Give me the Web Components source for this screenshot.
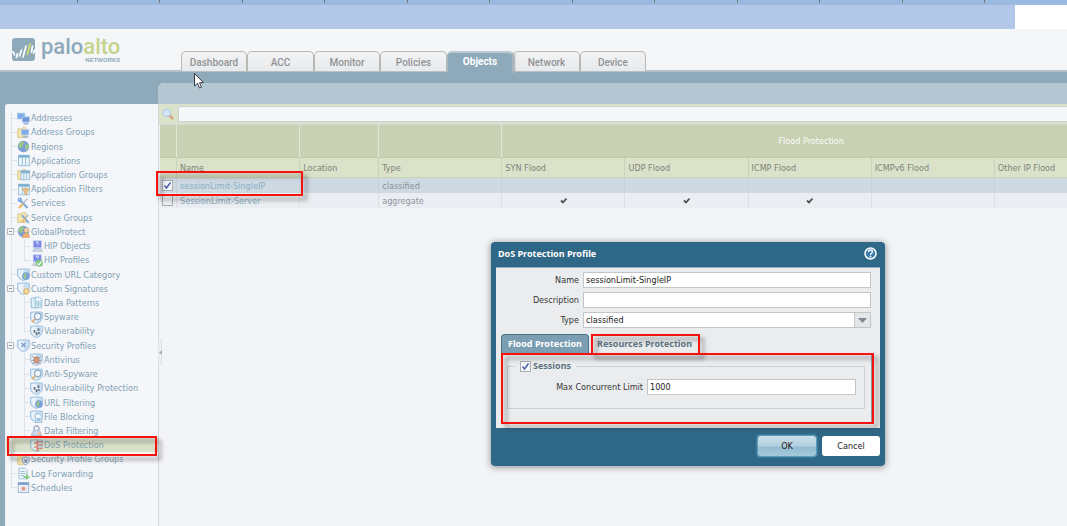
<!DOCTYPE html>
<html lang="en">
<head>
<meta charset="utf-8">
<title>DoS Protection</title>
<style>
  html, body { height: 100%; margin: 0; }
  body {
    font: 9px/14px "DejaVu Sans Condensed", "Noto Sans", sans-serif;
    background: #f3f4f6;
    overflow: hidden;
    --teal: #8da9ba;
    --link: #7fa1b4;
    --strong: bold 9px/14px "Noto Sans", sans-serif;
  }
</style>
</head>
<body>
<pan-app></pan-app>
<script>
const define = (name, html, setup) => customElements.define(name, class extends HTMLElement {
  constructor() {
    super();
    this.attachShadow({ mode: 'open' }).innerHTML = html;
  }
  connectedCallback() { if (setup) setup.call(this, this.shadowRoot); }
});

/* ---------- icons, on a 16 x 16 grid ---------- */
const P = {
  folder: '<path d="M1 3.500h5l1-1.500h4v12H1z" fill="#f6e08a" stroke="#c9a23c"/>',
  pc: '<rect x="1.500" y="1.500" width="9" height="7" fill="#3f86e0" stroke="#7aa7dc"/>',
  pcs: '<rect x=".5" y="1.500" width="9" height="7" fill="#3f86e0" stroke="#7aa7dc"/><rect x="6.500" y="6" width="9" height="6.500" fill="#2566c4" stroke="#8db4e6"/><path d="M8 14.500h6" stroke="#5479ad" stroke-width="1.500"/>',
  spc: '<rect x="5.500" y="4.500" width="9" height="6.500" fill="#3f86e0" stroke="#8db4e6"/><path d="M7 13.500h7" stroke="#5479ad" stroke-width="1.500"/>',
  globe: '<circle cx="8" cy="8" r="7" fill="#3a72c8"/><path d="M3 3.500l4-2 2 2-2 2v3L4 10 1.500 7zM10 6l4-1 .5 4-3 4-1.500-3z" fill="#68b04c"/>',
  smallGlobe: '<circle cx="11" cy="10" r="4.700" fill="#3a72c8"/><path d="M8 8l3-2 1.500 2-2 2 1 3-2 .5-1.500-3z" fill="#62ad49"/>',
  table: '<rect x="2" y="1.500" width="13" height="13" fill="#eaf5fc" stroke="#4d93bd"/><path d="M2 3h13" stroke="#3a87b7" stroke-width="3"/><path d="M6.500 3v11M10.500 3v11" stroke="#5fa2ca" stroke-width="1.200"/>',
  stable: '<rect x="5" y="3.500" width="10.500" height="11" fill="#eaf5fc" stroke="#4d93bd"/><path d="M5 5h10.500" stroke="#3a87b7" stroke-width="3"/><path d="M8.500 5v9M12 5v9" stroke="#5fa2ca" stroke-width="1.200"/>',
  funnel: '<path d="M6 7h9.500l-3.500 4v4l-2.500-1.500V11z" fill="#eba23a" stroke="#b97821" stroke-width=".8"/>',
  tools: '<path d="M3 3l10 10.500" stroke="#3c7ed0" stroke-width="2.500"/><circle cx="3.500" cy="3.500" r="2" fill="none" stroke="#3c7ed0" stroke-width="1.500"/><path d="M13 2L6 9" stroke="#7d96ae" stroke-width="1.500"/><path d="M7 8.500l-4.500 5" stroke="#e89a2c" stroke-width="3"/>',
  stools: '<path d="M6 5l8.500 9.500" stroke="#3c7ed0" stroke-width="2.200"/><path d="M14 4.500L10 9" stroke="#7d96ae" stroke-width="1.500"/><path d="M10 9l-4 5" stroke="#e89a2c" stroke-width="2.600"/>',
  user: '<circle cx="11.500" cy="6.500" r="3" fill="#f3be83" stroke="#a7642a" stroke-width=".8"/><path d="M6.500 15.500c0-7 9-7 9 0z" fill="#ed8a2c" stroke="#b8641f" stroke-width=".7"/>',
  hip: '<rect x="4" y="1" width="10" height="8.500" fill="#3349dd" stroke="#a6b6ec"/><path d="M7.500 4c0-2 3-2 3 0 0 1-1.500 1-1.500 2.500" fill="none" stroke="#fff" stroke-width="1.200"/><path d="M3 14l2-3.500h9l1.500 3.500z" fill="#b9c6dc" stroke="#7e90b1" stroke-width=".7"/>',
  check: '<circle cx="11.500" cy="11.500" r="4.300" fill="#3fae3c"/><path d="M9 11.500l2 2 3-4" fill="none" stroke="#fff" stroke-width="1.500"/>',
  shield: '<path d="M.7 1.500q7.300-1 14.500 0v7q-1 5-7.200 7-6.500-2-7.300-7z" fill="#b4d3ee" stroke="#5f99c9"/><path d="M8 2v12.500Q2.500 12 1.800 8V2.400z" fill="#e6f2fb"/>',
  gear: '<circle cx="11.500" cy="11.500" r="3.300" fill="#f0bc3a" stroke="#c58a1c" stroke-width="1.500" stroke-dasharray="2 1"/><circle cx="11.500" cy="11.500" r="1" fill="#fff"/>',
  docs: '<path d="M1.500 2.500h5l3 3v9h-8z" fill="#d6ecf8" stroke="#4597bd"/><path d="M6.500 1.500h5l3 3v10h-8z" fill="#eaf6fc" stroke="#4597bd"/><path d="M8.500 6v7M10.500 6v7M12.500 6v7" stroke="#4597bd"/>',
  lens: '<circle cx="9.500" cy="6.500" r="4" fill="#f2f9ff" stroke="#5a82ab" stroke-width="1.500"/><path d="M6.500 9.500L2.500 14" stroke="#d2913c" stroke-width="2.500"/>',
  dots: '<path d="M5.500 6v3.500M10.500 4v3.500M8 9v3.500M11 9v2" stroke="#1a2330" stroke-width="2"/>',
  cross: '<path d="M5.500 5l5 5M10.500 5l-5 5" stroke="#346cab" stroke-width="1.600"/>',
  bug: '<ellipse cx="8" cy="8.500" rx="3" ry="4" fill="#d8622f" stroke="#70351f"/><path d="M2.500 4l3 2.500M13.500 4l-3 2.500M2 9h3M11 9h3M3 13.500l3-2M13 13.500l-3-2" stroke="#5e3c30"/>',
  file: '<path d="M6.500 4.500h5l3 3v8h-8z" fill="#eaf6fc" stroke="#4f8fc2"/><rect x="8" y="10" width="5" height="4" fill="#6aa5d4"/>',
  lock: '<path d="M5 8V4.500q3-4.500 6 0V8" fill="none" stroke="#7486a4" stroke-width="1.800"/><path d="M2 14.500q0-7 6-7t6 7z" fill="#b8c8e0" stroke="#6683b0"/><circle cx="11.500" cy="12" r="2" fill="#e9a66e"/>',
  dos: '<path d="M9 2v13" stroke="#d84b38" stroke-width="2"/><path d="M9 3.500h6.500M9 7.500h6.500M9 11.500h6.500M5 5h3M5 10h3" stroke="#e0503e" stroke-width="1.700"/>',
  sshield: '<path d="M6.500 5.500q4-1 8.500 0v4q-1 4-4.500 5.500-3-1.500-4-5.500z" fill="#d2e5f5" stroke="#47679a"/><path d="M9 8l3.500 4M12.500 8L9 12" stroke="#273e72" stroke-width="1.400"/>',
  log: '<path d="M2.500 1.500h7l3 3v10h-10z" fill="#edf6fc" stroke="#5893c2"/><path d="M4.500 5.500h5M4.500 8h6M4.500 10.500h4" stroke="#4c88b7"/><path d="M8 11h3V8l5 4.500-5 3.500v-2.500H8z" fill="#4eb34b"/>',
  cal: '<rect x="1.500" y="2" width="13" height="12" fill="#fff" stroke="#4878b4"/><path d="M1.500 3.500h13" stroke="#3f74ba" stroke-width="3"/><path d="M4 7h9M4 9.500h9M4 12h9" stroke="#7fa5cf" stroke-dasharray="2 1.300"/><rect x="6" y="7.500" width="4" height="4" fill="#dd5b3e"/>',
  find: '<path d="M9.500 9.500L14 14" stroke="#d39a6c" stroke-width="3" stroke-linecap="round"/><circle cx="6.500" cy="6.500" r="4.800" fill="#d5e8fb" stroke="#a8c6ea" stroke-width="1.500"/>'
};
customElements.define('ui-icon', class extends HTMLElement {
  connectedCallback() {
    const root = this.shadowRoot || this.attachShadow({ mode: 'open' });
    root.innerHTML = `<style>:host{display:block;width:13px;height:13px;opacity:.65}svg{display:block;width:100%;height:100%}</style>
      <svg viewBox="0 0 16 16" aria-hidden="true">${this.getAttribute('parts').split(' ').map(p => P[p]).join('')}</svg>`;
  }
});

/* ---------- red marker frame laid over its parent ---------- */
define('red-frame', `<style>
  :host { position: absolute; z-index: 2; box-sizing: border-box; border: 2px solid #f5120f; pointer-events: none;
    filter: drop-shadow(4px 4px 2px rgba(60,60,60,.55)); }
</style>`);

/* ---------- ruler strip and address band ---------- */
define('top-strip', `<style>
  :host { display: block; background: #fff; }
  .ticks { height: 5px; background: #9bbae0; display: flex; overflow: hidden; padding-left: 77px; gap: 81px; }
  .ticks i { flex: none; width: 1px; height: 3px; background: #77797f; }
  .ticks i:nth-child(even) { margin-right: 1px; }
  .band { height: 24px; background: #b3c7e8; margin-right: 52px; }
</style><div class="ticks"></div><div class="band"></div>`,
function (r) { r.querySelector('.ticks').innerHTML = '<i></i>'.repeat(12); });

define('brand-logo', `<style>
  :host { display: flex; gap: 6px; color: var(--teal); }
  svg { width: 23px; height: 23px; margin-top: 1px; }
  .word { display: flex; flex-direction: column; font-family: Roboto, sans-serif; }
  b { font-weight: 500; font-size: 22px; line-height: 20px; }
  b span { color: #c4d48e; }
  small { font: bold 6px/6px "Liberation Sans", sans-serif; align-self: flex-end; }
</style>
<svg viewBox="0 0 23 23" aria-hidden="true"><rect width="23" height="23" rx="3" fill="#8da9ba"/>
<path d="M0 14h1.500l1 3M4.500 19.500l1-4M7.500 18l2-6M11 19l3-11M19.500 14l1-6M21.500 15l1-3" stroke="#fff" stroke-width="1.700" stroke-linecap="round" fill="none"/>
<path d="M15.500 16l2.500-10" stroke="#c8da6e" stroke-width="2" stroke-linecap="round"/></svg>
<div class="word"><b>palo<span>alto</span></b><small>NETWORKS</small></div>`);

define('main-nav', `<style>
  :host { display: flex; }
  button { width: 66px; height: 20px; margin: 0; padding: 2px 0 0; box-sizing: border-box; border: 1px solid #b9b9b4; border-bottom: 0;
    border-radius: 5px 5px 0 0; background: linear-gradient(#f2f3f5, #e8e9eb); color: #929395;
    font: 500 10px/16px Roboto, sans-serif; }
  button:nth-child(odd):not(:last-child) { width: 67px; }
  button.on { background: var(--teal); color: #fff; font-weight: 700; height: 22px; border-color: #a9b9c3; border-top: 2px solid #b9cad5; padding: 0 0 2px; box-shadow: 2px 1px 2px #aaaeb1; clip-path: inset(-2px -4px 0 0); }
</style>`, function (r) {
  for (const t of ['Dashboard', 'ACC', 'Monitor', 'Policies', 'Objects', 'Network', 'Device']) {
    const b = document.createElement('button');
    b.textContent = t; if (t === 'Objects') b.className = 'on';
    r.append(b);
  }
});

define('app-header', `<style>
  :host { display: flex; height: 43px; box-sizing: border-box; background: #f5f6f8; border-bottom: 2px solid #b8c0c7; padding-left: 12px; position: relative; z-index: 1; }
  brand-logo { width: 169px; box-sizing: border-box; padding-top: 8px; }
  main-nav { align-self: flex-start; padding-top: 22px; }
  svg { position: absolute; left: 194px; top: 44px; width: 11px; height: 16px; }
</style><brand-logo></brand-logo><main-nav></main-nav>
<svg viewBox="0 0 11 16" aria-hidden="true"><path d="M.5.5v12.500l3-2.700 2 4.700 2-.9-2-4.400h4z" fill="#fff" stroke="#3a3a44"/></svg>`);

/* ---------- object tree ---------- */
const TREE = [
  [1, 'pcs', 'Addresses'], [1, 'folder spc', 'Address Groups'], [1, 'globe', 'Regions'], [1, 'table', 'Applications'],
  [1, 'folder stable', 'Application Groups'], [1, 'table funnel', 'Application Filters'], [1, 'tools', 'Services'],
  [1, 'folder stools', 'Service Groups'], [1, 'globe user', 'GlobalProtect', 1], [2, 'hip', 'HIP Objects'],
  [2, 'hip check', 'HIP Profiles', 0, 1], [1, 'shield smallGlobe', 'Custom URL Category'], [1, 'shield gear', 'Custom Signatures', 1],
  [2, 'docs', 'Data Patterns'], [2, 'shield lens', 'Spyware'], [2, 'shield dots', 'Vulnerability', 0, 1],
  [1, 'shield cross', 'Security Profiles', 1], [2, 'shield bug', 'Antivirus'], [2, 'shield lens', 'Anti-Spyware'],
  [2, 'shield dots', 'Vulnerability Protection'], [2, 'shield smallGlobe', 'URL Filtering'], [2, 'shield file', 'File Blocking'],
  [2, 'lock', 'Data Filtering'], [2, 'shield dos', 'DoS Protection', 0, 1], [1, 'folder sshield', 'Security Profile Groups'],
  [1, 'log', 'Log Forwarding'], [1, 'cal', 'Schedules', 0, 1]
];
define('tree-item', `<style>
  :host { display: flex; align-items: center; position: relative; min-height: 0; padding-left: 1px; }
  :host([selected]) { background: #dae1c9; }
  .guide { flex: none; width: 10px; align-self: stretch; display: grid; place-items: center start;
    background: linear-gradient(#dfe3e7, #dfe3e7) 4px 0 / 1px 100% no-repeat, linear-gradient(#dfe3e7, #dfe3e7) 4px 50% / 6px 1px no-repeat; }
  .guide.through { width: 13px; background: linear-gradient(#e3e6ea, #e3e6ea) 4px 0 / 1px 100% no-repeat; }
  .guide.end { background: linear-gradient(#dfe3e7, #dfe3e7) 4px 0 / 1px 50% no-repeat, linear-gradient(#dfe3e7, #dfe3e7) 4px 50% / 6px 1px no-repeat; }
  .box { width: 7px; height: 7px; box-sizing: border-box; border: 1px solid #b3bcc5; display: grid; place-items: center;
    background: linear-gradient(#8a97a4, #8a97a4) center / 3px 1px no-repeat #f5f6f8; }
  ui-icon { flex: none; margin-right: 1px; }
  a { color: var(--link); text-decoration: none; white-space: nowrap; line-height: 14px; }
</style><span id="g" style="display:contents"></span><ui-icon parts="table"></ui-icon><a href="#"><slot></slot></a>`,
function (r) {
  const d = this.dataset;
  const leaf = `<span class="guide ${d.end ? 'end' : ''}">${d.open ? '<i class="box"></i>' : ''}</span>`;
  r.getElementById('g').innerHTML = (d.level === '2' ? '<span class="guide through"></span>' : '') + leaf;
  const icon = document.createElement('ui-icon');
  icon.setAttribute('parts', d.icon);
  r.querySelector('ui-icon').replaceWith(icon);
});
define('object-tree', `<style>
  :host { display: block; background: #f5f6f9; border-radius: 3px 0 0 0; border-left: 1px solid #eef1f4; padding-top: 7px; }
  nav { display: grid; grid-template-rows: repeat(27, 1fr); height: 384px; }
  red-frame { left: 1px; right: 1px; top: -2px; bottom: -4px; }
</style><nav></nav>`, function (r) {
  const nav = r.querySelector('nav');
  for (const [level, icon, text, open, end] of TREE) {
    const it = document.createElement('tree-item');
    Object.assign(it.dataset, { level, icon }, open ? { open: 1 } : {}, end ? { end: 1 } : {});
    it.textContent = text;
    if (text === 'DoS Protection') {
      it.toggleAttribute('selected', true);
      const wrap = document.createElement('div');
      wrap.style.cssText = 'position:relative;display:grid;z-index:1';
      wrap.append(it, document.createElement('red-frame'));
      nav.append(wrap);
    } else nav.append(it);
  }
});

/* ---------- tick box ---------- */
define('tick-box', `<style>
  :host { display: inline-block; width: 11px; height: 11px; }
  input { appearance: none; display: block; box-sizing: border-box; margin: 0; width: 11px; height: 11px; border: 1px solid #a9adb1; background: #f1f2f3; }
  input:checked { background: #f4f5f6 url('data:image/svg+xml,<svg xmlns="http://www.w3.org/2000/svg" viewBox="0 0 9 9"><path d="M1.500 4.500l2 2.500L7.500 1.500" fill="none" stroke="%234a63a8" stroke-width="1.500"/></svg>') center / 9px 9px; }
</style><input type="checkbox">`, function (r) {
  const i = r.querySelector('input');
  i.checked = this.hasAttribute('checked');
  i.setAttribute('aria-label', this.getAttribute('label') || 'Select');
});

/* ---------- grid ---------- */
define('profile-grid', `<style>
  :host { display: block; overflow: hidden; padding-left: 1px; }
  table { border-collapse: separate; border-spacing: 0; table-layout: fixed; width: 957px; }
  th, td { padding: 0 0 0 3px; box-sizing: border-box; font-weight: 400; text-align: left; border-left: 1px solid #dfe4d6; white-space: nowrap; }
  tr > :first-child { border-left: 0; padding: 0 0 0 2px; }
  .group th { height: 33px; background: #c9d1b4; border-bottom: 1px solid #c1cb9f; border-left-color: #e2e7d8; color: #fafbf5; text-align: center; box-sizing: border-box; }
  .cols th { height: 20px; background: #dae2ca; color: #7f8279; border-left-color: #c9d3ba; border-bottom: 1px solid #c9d5b0; }
  td { height: 15px; line-height: 14px; background: #eaedf1; color: #8f969c; border-left-color: #dde2e7; }
  .sel td { background: #cfd9e2; color: #849396; border-left-color: #c6d1da; }
  a { color: #86afc4; text-decoration: none; }
  .mark { text-align: center; padding: 0; }
  .mark svg { display: block; width: 7px; height: 7px; margin: 0 auto; }
  tick-box { display: block; }
</style>
<table>
  <colgroup><col style="width:16px"><col style="width:123px"><col style="width:79px"><col style="width:123px"><col span="5" style="width:123px"></colgroup>
  <thead>
    <tr class="group"><th></th><th></th><th></th><th></th><th colspan="5">Flood Protection</th></tr>
    <tr class="cols"><th></th><th>Name</th><th>Location</th><th>Type</th><th>SYN Flood</th><th>UDP Flood</th><th>ICMP Flood</th><th>ICMPv6 Flood</th><th>Other IP Flood</th></tr>
  </thead>
  <tbody>
    <tr class="sel"><td><tick-box checked label="sessionLimit-SingleIP"></tick-box></td><td><a href="#">sessionLimit-SingleIP</a></td><td></td><td>classified</td><td></td><td></td><td></td><td></td><td></td></tr>
    <tr><td><tick-box label="SessionLimit-Server"></tick-box></td><td><a href="#">SessionLimit-Server</a></td><td></td><td>aggregate</td><td class="mark"></td><td class="mark"></td><td class="mark"></td><td></td><td></td></tr>
  </tbody>
</table>`, function (r) {
  r.querySelectorAll('.mark').forEach(c => c.innerHTML =
    '<svg viewBox="0 0 7 7" role="img" aria-label="yes"><path d="M1 3.500l2 2L6.500 1.500" fill="none" stroke="#4c5053" stroke-width="1.800"/></svg>');
});

define('search-bar', `<style>
  :host { display: flex; align-items: center; gap: 4px; height: 21px; box-sizing: border-box; background: #dbe2cb; padding-left: 3px; border-bottom: 1px solid #d5d9d2; }
  input { flex: 1; min-width: 0; height: 16px; box-sizing: border-box; margin: 0; border: 1px solid #cdd1d6; border-right: 0; background: #f6f7f9; font: inherit; }
  ui-icon { width: 12px; height: 12px; opacity: .9; }
</style><ui-icon parts="find"></ui-icon><input type="text" aria-label="Search">`);

/* ---------- dialog ---------- */
define('form-row', `<style>
  :host { display: flex; align-items: center; gap: 4px; }
  label { width: var(--label, 79px); text-align: right; color: #33363a; }
  .field { flex: 1; display: flex; position: relative; }
  input, select { appearance: none; width: 100%; height: 16px; box-sizing: border-box; margin: 0; padding: 0 2px; border: 1px solid #c3c6c8; border-radius: 0; background: #fff; font: inherit; line-height: 14px; color: #222; }
  .arrow { position: absolute; right: 0; top: 0; width: 17px; height: 16px; box-sizing: border-box; border: 1px solid #c3c6c8; background: #e4e6e8; pointer-events: none; }
  .arrow svg { display: block; width: 9px; height: 5px; margin: 5px 3px; }
</style><label for="f"></label><div class="field"></div>`, function (r) {
  r.querySelector('label').textContent = this.getAttribute('label');
  const v = this.getAttribute('value') || '';
  r.querySelector('.field').innerHTML = this.hasAttribute('select')
    ? `<select id="f"><option>${v}</option></select><span class="arrow"><svg viewBox="0 0 9 5"><path d="M0 0h9L4.500 5z" fill="#7c8791"/></svg></span>`
    : `<input id="f" type="text" value="${v}">`;
});
define('profile-dialog', `<style>
  :host { display: block; width: 394px; box-sizing: border-box; background: #2f6887; border-radius: 4px; padding: 0 5px; box-shadow: 0 1px 6px 1px rgba(90,95,100,.55); }
  header { display: flex; align-items: center; justify-content: space-between; height: 25px; padding: 0 3px 2px 2px; box-sizing: border-box; color: #fff; }
  h2 { margin: 0; font: var(--strong); }
  .help { border: 0; background: none; padding: 0; width: 13px; height: 13px; }
  .help svg { display: block; }
  .body { background: #ebecee; border-top: 1px solid #8fb0c4; padding: 4px 9px 4px 4px; display: grid; box-sizing: border-box; height: 161px; grid-template-rows: auto 1fr; }
  .fields { display: grid; gap: 4px; }
  .tabs { display: flex; gap: 2px; padding-top: 6px; margin-left: 1px; }
  .tab { position: relative; width: 109px; }
  .tab.on { width: 88px; }
  .tab button { width: 100%; height: 19px; margin: 0; box-sizing: border-box; border: 0; border-radius: 4px 4px 0 0; padding: 0 6px; color: #5c727f; background: #e9ebed;
    font: var(--strong); text-align: left; white-space: nowrap; }
  .tab.on button { background: #7b9eb3; color: #fff; border: 1px solid #4f7286; border-bottom: 0; }
  .tab red-frame { inset: 0 0 -2px 0; }
  .panel { position: relative; margin-left: 1px; border-right: 1px solid #8b9ba6; margin-right: -1px; padding: 6px 6px 0; }
  .panel red-frame { inset: 0 -3px 0 0; }
  fieldset { margin: 0; min-width: 0; border: 1px solid #cdd0d3; padding: 6px 8px 13px; }
  legend { display: flex; align-items: center; gap: 2px; padding: 0 5px; margin-left: -1px; font: var(--strong); color: #5c727f; }
  fieldset form-row { --label: 127px; }
  footer { display: flex; justify-content: flex-end; gap: 6px; padding: 8px 0 10px; }
  footer button { width: 58px; height: 20px; border: 0; border-radius: 3px; background: #fff; color: #222; font: inherit; padding: 0; }
  footer .ok { background: linear-gradient(#c9dfea, #b3d0df 50%, #93bcd1 55%, #a5cadb); box-shadow: 0 0 0 1px #5a9cbd, 0 0 2px 1px #61a4c6; }
</style>
<header><h2>DoS Protection Profile</h2>
<button class="help" aria-label="Help"><svg width="13" height="13" viewBox="0 0 13 13"><circle cx="6.500" cy="6.500" r="5.500" fill="#3a7eb0" stroke="#fff" stroke-width="1.500"/><path d="M4.500 5c0-2.700 4-2.500 4-.2 0 1.500-2 1.400-2 2.900" fill="none" stroke="#fff" stroke-width="1.400"/><circle cx="6.500" cy="9.500" r=".9" fill="#fff"/></svg></button></header>
<div class="body">
  <div>
    <div class="fields">
      <form-row label="Name" value="sessionLimit-SingleIP"></form-row>
      <form-row label="Description"></form-row>
      <form-row label="Type" value="classified" select></form-row>
    </div>
    <div class="tabs"><div class="tab on"><button>Flood Protection</button></div><div class="tab"><button>Resources Protection</button><red-frame></red-frame></div></div>
  </div>
  <div class="panel">
    <fieldset><legend><tick-box checked label="Sessions"></tick-box>Sessions</legend>
      <form-row label="Max Concurrent Limit" value="1000"></form-row></fieldset>
    <red-frame></red-frame>
  </div>
</div>
<footer><button class="ok">OK</button><button>Cancel</button></footer>`);

/* ---------- page ---------- */
define('pan-app', `<style>
  :host { display: flex; flex-direction: column; min-height: 100vh; position: relative; }
  .work { flex: 1; display: grid; grid-template-columns: 153px 1fr; background: var(--teal); padding: 11px 0 0 5px; }
  object-tree { margin-top: 21px; }
  main { min-width: 0; background: #f3f4f6; border-left: 1px solid #d3d8dd; border-radius: 6px 0 0 0; position: relative; box-sizing: border-box; }
  .title { height: 21px; background: #b4c6d2; border-radius: 6px 0 0 0; margin-left: -1px; }
  .grip { position: absolute; left: -1px; top: 256px; width: 4px; height: 26px; padding: 0; border: 1px solid #e2e5e8; background: #eceef0; }
  .grip svg { display: block; width: 3px; height: 5px; }
  main > red-frame { left: -3px; top: 88px; width: 147px; height: 25px; }
  profile-dialog { position: absolute; left: 491px; top: 242px; }
</style>
<top-strip></top-strip><app-header></app-header>
<div class="work">
  <object-tree></object-tree>
  <main><div class="title"></div><search-bar></search-bar><profile-grid></profile-grid>
    <red-frame></red-frame>
    <button class="grip" aria-label="Collapse"><svg viewBox="0 0 3 5"><path d="M3 0v5L0 2.500z" fill="#a9afb5"/></svg></button></main>
</div>
<profile-dialog></profile-dialog>`);
</script>
</body>
</html>
